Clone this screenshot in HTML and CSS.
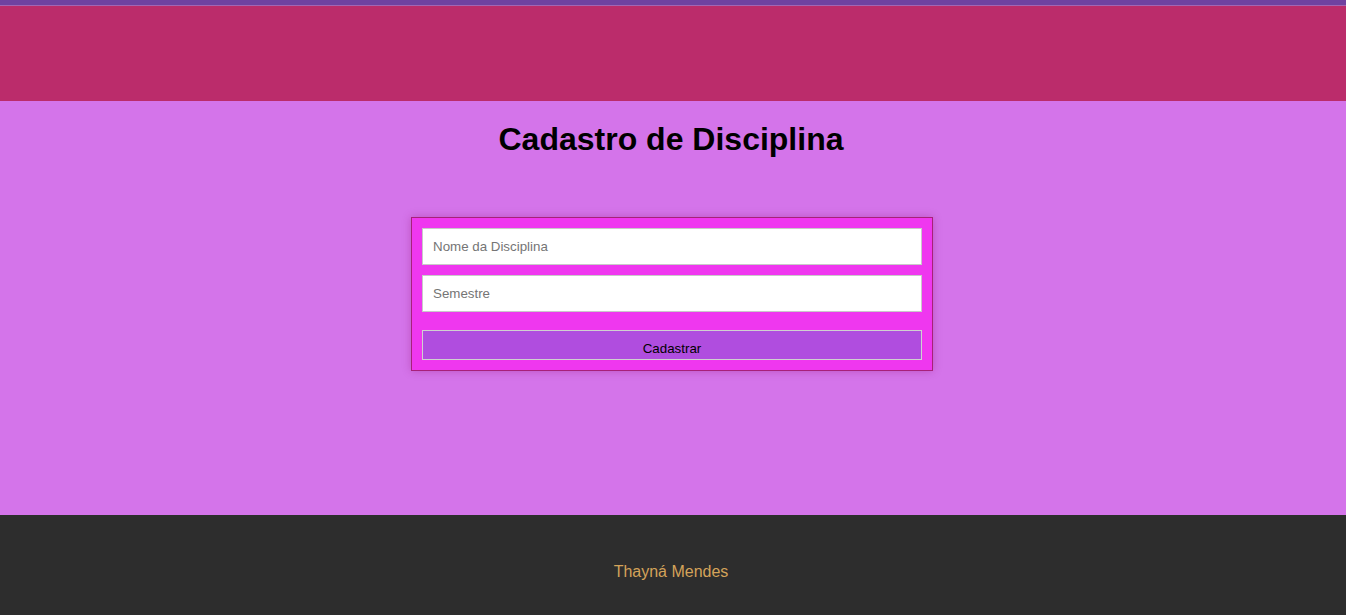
FILE: index.html
```html
<!DOCTYPE html>
<html lang="pt-BR">
<head>
<meta charset="utf-8">
<title>Cadastro de Disciplina</title>
<link rel="stylesheet" href="styles.css">
</head>
<body>
<div class="page">
  <div class="topbar"></div>
  <header class="header"></header>
  <main class="main">
    <h1 class="title">Cadastro de Disciplina</h1>
    <form class="form">
      <input class="field" type="text" placeholder="Nome da Disciplina">
      <input class="field" type="text" placeholder="Semestre">
      <button class="btn" type="button">Cadastrar</button>
    </form>
  </main>
  <footer class="footer">
    <p class="author">Thayná Mendes</p>
  </footer>
</div>
</body>
</html>
```
FILE: styles.css
```css
html, body {
  margin: 0;
  padding: 0;
  background: #ffffff;
  height: 100%;
  overflow: hidden;
}
body {
  font-family: "Liberation Sans", Arial, sans-serif;
}
.page {
  margin-right: 1px;
  display: flex;
  flex-direction: column;
  height: 615px;
}
.topbar {
  height: 5px;
  background: #6f42a1;
  border-bottom: 1px solid #a266b4;
}
.header {
  height: 95px;
  background: #bb2c6b;
}
.main {
  flex: 1;
  background: #d474ea;
  display: flex;
  flex-direction: column;
  align-items: center;
  padding-right: 2px;
}
.title {
  margin: 20px 2px 0 0;
  font-size: 32px;
  font-weight: bold;
  color: #000;
  line-height: 37px;
}
.form {
  margin-top: 59px;
  width: 500px;
  padding: 10px;
  background: #ef37ef;
  border: 1px solid #a8207a;
  box-shadow: 0 0 8px rgba(160, 40, 140, 0.45);
  display: flex;
  flex-direction: column;
}
.field {
  box-sizing: border-box;
  height: 37px;
  width: 100%;
  margin: 0 0 10px;
  padding: 0 10px;
  border: 1px solid #c9c9c9;
  background: #fff;
  font-family: "Liberation Sans", Arial, sans-serif;
  font-size: 13.33px;
  color: #333;
  outline: none;
}
.field::placeholder {
  color: #757575;
}
.field + .btn {
  margin-top: 8px;
}
.btn {
  box-sizing: border-box;
  height: 30px;
  width: 100%;
  padding: 6px 0 0;
  background: #b04ddf;
  border: 1px solid #d0d0d0;
  font-family: "Liberation Sans", Arial, sans-serif;
  font-size: 13.33px;
  color: #000;
}
.footer {
  height: 100px;
  background: #2d2d2d;
  display: flex;
  justify-content: center;
  padding-right: 4px;
}
.author {
  margin: 48px 0 0;
  font-size: 16px;
  line-height: 18px;
  color: #d4a35a;
}
```
